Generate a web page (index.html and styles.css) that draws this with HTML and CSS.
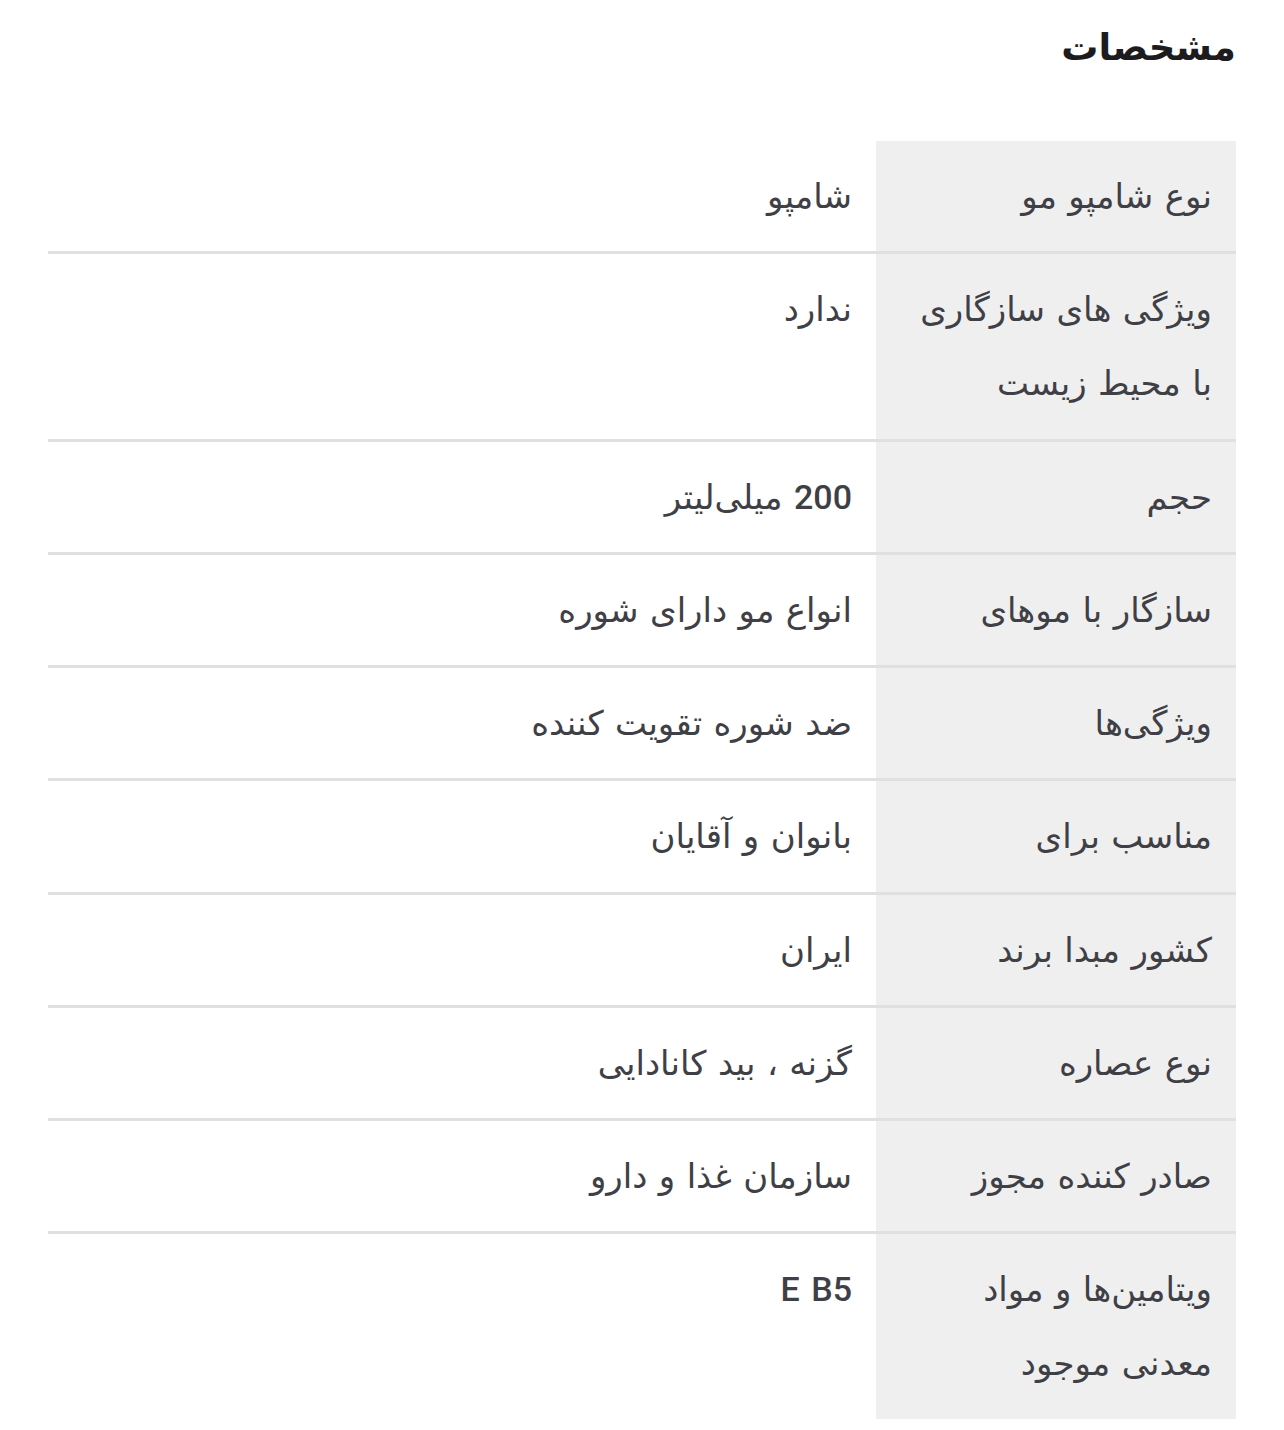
FILE: index.html
```html
<!DOCTYPE html>
<html lang="fa" dir="rtl">
<head>
<meta charset="utf-8">
<title>مشخصات</title>
<link rel="stylesheet" href="styles.css">
</head>
<body>
<section class="specs">
  <h2 class="specs-title">مشخصات</h2>
  <div class="spec-table">
    <div class="spec-row"><div class="spec-label">نوع شامپو مو</div><div class="spec-value">شامپو</div></div>
    <div class="spec-row"><div class="spec-label">ویژگی های سازگاری با محیط زیست</div><div class="spec-value">ندارد</div></div>
    <div class="spec-row"><div class="spec-label">حجم</div><div class="spec-value">200 میلی‌لیتر</div></div>
    <div class="spec-row"><div class="spec-label">سازگار با موهای</div><div class="spec-value">انواع مو دارای شوره</div></div>
    <div class="spec-row"><div class="spec-label">ویژگی‌ها</div><div class="spec-value">ضد شوره تقویت کننده</div></div>
    <div class="spec-row"><div class="spec-label">مناسب برای</div><div class="spec-value">بانوان و آقایان</div></div>
    <div class="spec-row"><div class="spec-label">کشور مبدا برند</div><div class="spec-value">ایران</div></div>
    <div class="spec-row"><div class="spec-label">نوع عصاره</div><div class="spec-value">گزنه ، بید کانادایی</div></div>
    <div class="spec-row"><div class="spec-label">صادر کننده مجوز</div><div class="spec-value">سازمان غذا و دارو</div></div>
    <div class="spec-row"><div class="spec-label">ویتامین‌ها و مواد معدنی موجود</div><div class="spec-value" dir="ltr">E B5</div></div>
  </div>
</section>
</body>
</html>
```

FILE: styles.css
```css
html, body {
  margin: 0;
  padding: 0;
  background: #ffffff;
}

body {
  font-family: Roboto, "DejaVu Sans", sans-serif;
  color: #3f4046;
}

.specs {
  padding: 20px 48px 0 48px;
}

.specs-title {
  margin: 0;
  font-family: "DejaVu Sans", sans-serif;
  font-size: 37px;
  line-height: 56px;
  font-weight: 700;
  color: #1c1c1e;
}

.spec-table {
  margin-top: 65px;
  display: flex;
  flex-direction: column;
}

.spec-row {
  display: flex;
  border-bottom: 3px solid #e0e0e2;
}

.spec-row:last-child {
  border-bottom: none;
}

.spec-label {
  flex: 0 0 360px;
  box-sizing: border-box;
  background: #efeff0;
  padding: 18px 24px 18.25px 24px;
  font-size: 34px;
  line-height: 74px;
  word-spacing: 3px;
}

.spec-value {
  flex: 1 1 auto;
  padding: 18px 24px 18.25px 24px;
  font-size: 34px;
  line-height: 74px;
  font-weight: 500;
  text-align: right;
  word-spacing: 3px;
}
```
